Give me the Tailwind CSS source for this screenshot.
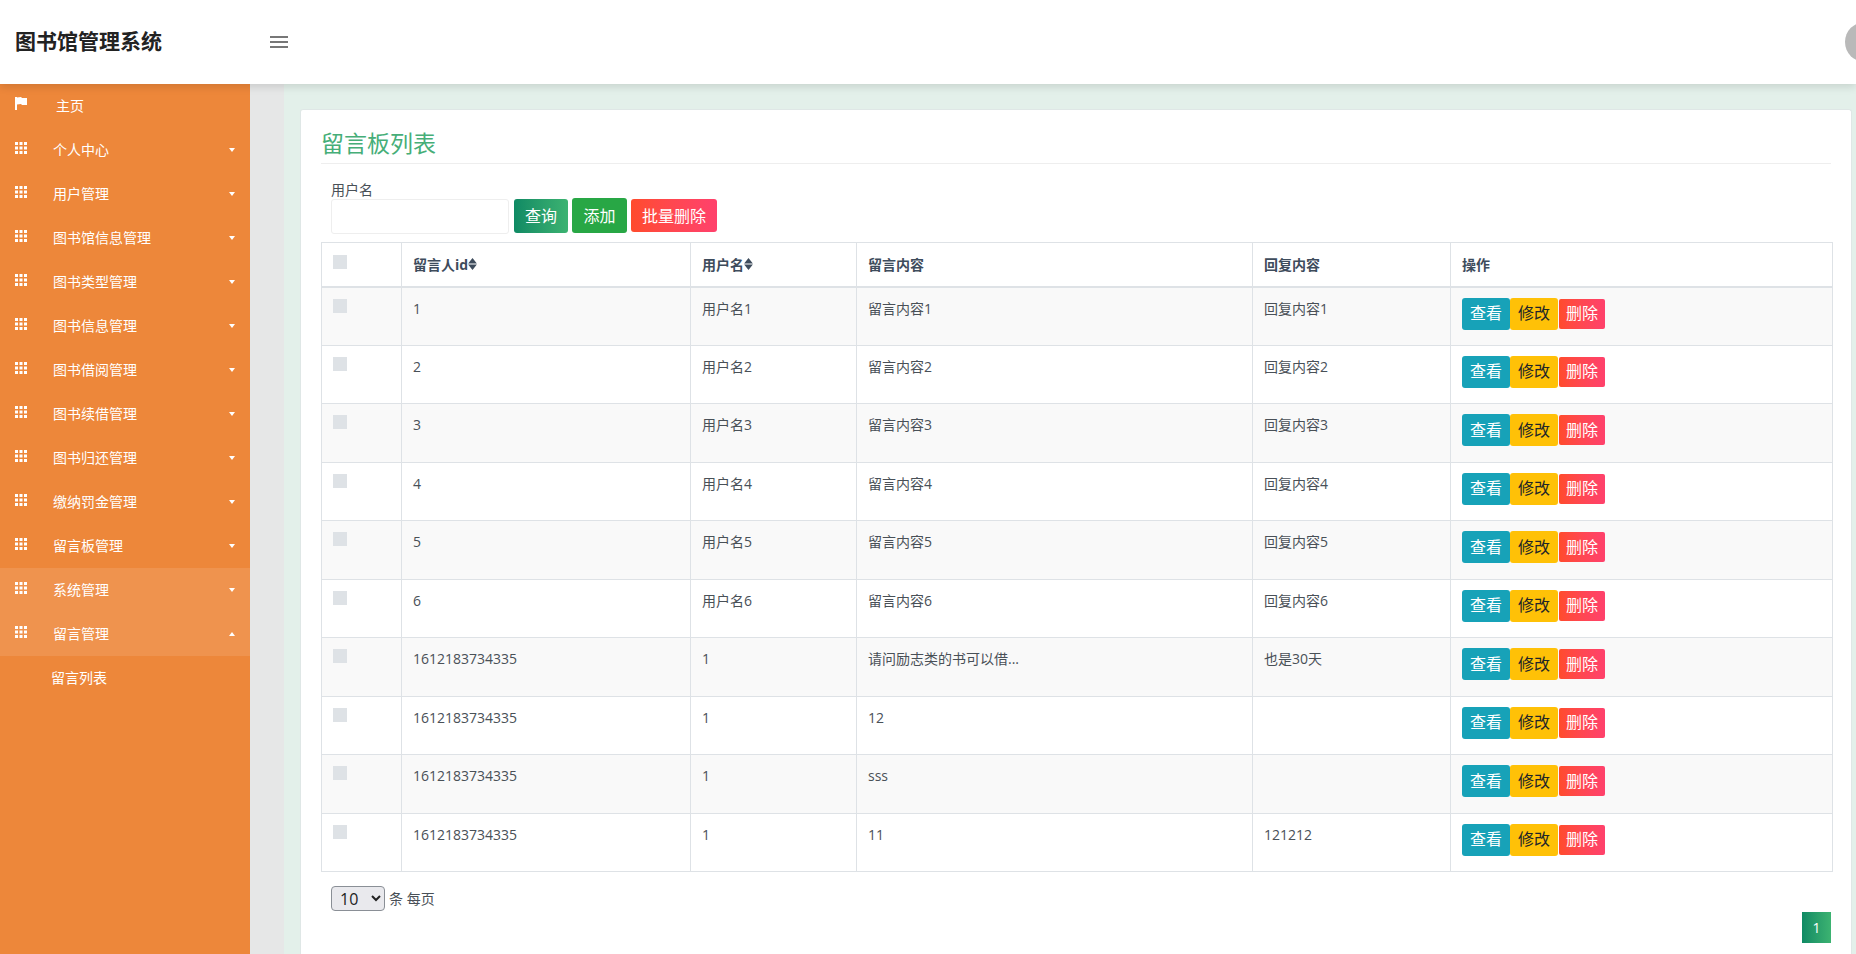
<!DOCTYPE html>
<html lang="zh-CN">
<head>
  <meta charset="UTF-8">
  <title>图书馆管理系统</title>
  <script src="https://cdn.jsdelivr.net/npm/@tailwindcss/browser@4"></script>
</head>
<body class="h-[954px] overflow-hidden bg-white text-[14px] text-[#495057] font-['Open_Sans','Noto_Sans_CJK_SC',sans-serif]">

  <!-- header -->
  <header class="relative z-10 flex h-[84px] items-center overflow-hidden bg-white shadow-[0_3px_8px_rgba(0,0,0,0.12)]">
    <div class="w-[250px] pb-[2px] pl-[15px] text-[21px] leading-[28px] font-bold text-[#222]">图书馆管理系统</div>
    <svg class="ml-[20px] h-[12px] w-[18px] text-[#777]" viewBox="0 0 18 12" fill="currentColor"><rect y="0" width="18" height="2"/><rect y="5" width="18" height="2"/><rect y="10" width="18" height="2"/></svg>
    <div class="mr-[-29px] ml-auto h-10 w-10 rounded-full bg-[#b9b9b9]"></div>
  </header>

  <div class="flex h-[870px]">
    <!-- sidebar -->
    <aside id="menu" class="w-[250px] shrink-0 bg-[#ed873a] text-[14px] text-white">
      <a class="flex h-[44px] items-center pl-[15px]">
        <svg class="mb-[5px] h-[13px] w-[13px]" viewBox="0 0 13 13" fill="currentColor"><rect x="0" y="0" width="2" height="13"/><path d="M2 0.5 L6 0 L7 1 L12 1 L12 8 L7 8 L6 7 L2 7.500 Z"/></svg>
        <span class="ml-[28px] pb-[2px]">主页</span>
      </a>
    </aside>

    <!-- main -->
    <main class="min-w-0 flex-1 bg-[#e6e7e7] pl-[34px]">
      <div class="h-full bg-[#e3f0ea] pt-[25px] pl-[16px] pr-[4px]">
        <section class="h-full rounded-t-[3px] border border-b-0 border-[#dfe7e6] bg-white px-[20px] pt-[18px]">
          <h2 class="h-[36px] border-b border-[#eeeeee] text-[23px] leading-[30px] text-[#46ae78]">留言板列表</h2>

          <form class="flex h-[78px] items-end pb-[8px] pl-[10px]">
            <label class="mr-[5px] flex flex-col text-[14px] leading-[18px]">用户名
              <input class="mt-0 h-[35px] w-[178px] rounded-[3px] border border-[#eeeeee] bg-white" type="text">
            </label>
            <button type="button" class="mr-[4px] mb-[1px] h-[34px] w-[54px] rounded-[3px] bg-gradient-to-r from-[#0e8a64] to-[#3cb371] text-[16px] text-white">查询</button>
            <button type="button" class="mr-[4px] mb-[1px] h-[35px] w-[55px] rounded-[3px] bg-[#28a745] text-[16px] text-white">添加</button>
            <button type="button" class="mb-[2px] h-[33px] w-[86px] rounded-[3px] bg-gradient-to-r from-[#ff4b2b] to-[#ff416c] text-[16px] text-white">批量删除</button>
          </form>

          <table class="w-[1511px] table-fixed border-collapse border border-[#dee2e6] text-[14px] leading-[21px]">
            <colgroup><col class="w-[80px]"><col class="w-[289px]"><col class="w-[166px]"><col class="w-[396px]"><col class="w-[198px]"><col class="w-[382px]"></colgroup>
            <thead>
              <tr class="h-[44px] border-b-2 border-[#dee2e6] text-left font-bold text-[#3e4c5c]">
                <th class="border-r border-[#dee2e6] px-[11px] pb-[5px] align-middle"><span class="block h-[14px] w-[14px] bg-[#dee2e6]"></span></th>
                <th class="border-r border-[#dee2e6] px-[11px]"><span class="flex items-center">留言人id<svg class="h-[12px] w-[9px]" viewBox="0 0 8 11" fill="currentColor"><path d="M0 5L4 0L8 5ZM0 6L8 6L4 11Z"/></svg></span></th>
                <th class="border-r border-[#dee2e6] px-[11px]"><span class="flex items-center">用户名<svg class="h-[12px] w-[9px]" viewBox="0 0 8 11" fill="currentColor"><path d="M0 5L4 0L8 5ZM0 6L8 6L4 11Z"/></svg></span></th>
                <th class="border-r border-[#dee2e6] px-[11px]">留言内容</th>
                <th class="border-r border-[#dee2e6] px-[11px]">回复内容</th>
                <th class="px-[11px]">操作</th>
              </tr>
            </thead>
            <tbody id="rows"></tbody>
          </table>

          <div class="mt-[14px] flex items-center pl-[10px]">
            <select class="h-[25px] w-[54px] appearance-auto rounded-[4px] border border-[#8a8f96] bg-[#e9e9ed] pl-[4px] text-[16px] text-[#222]"><option>10</option></select>
            <span class="ml-[4px]">条 每页</span>
          </div>
          <div class="mt-px flex justify-end">
            <span class="flex h-[31px] w-[29px] items-center justify-center bg-gradient-to-r from-[#0e8a64] to-[#3cb371] text-white">1</span>
          </div>
        </section>
      </div>
    </main>
  </div>

  <script>
    const grid = '<svg class="mb-[4px] h-[12px] w-[12px]" viewBox="0 0 12 12" fill="currentColor"><path d="M0 0h3v3H0zM4.500 0h3v3h-3zM9 0h3v3H9zM0 4.500h3v3H0zM4.500 4.500h3v3h-3zM9 4.500h3v3H9zM0 9h3v3H0zM4.500 9h3v3h-3zM9 9h3v3H9z"/></svg>';
    const down = '<span class="ml-auto h-0 w-0 border-x-[3.5px] border-t-[4px] border-x-transparent border-t-white"></span>';
    const up = '<span class="ml-auto h-0 w-0 border-x-[3.5px] border-b-[4px] border-x-transparent border-b-white"></span>';

    const names = ['个人中心', '用户管理', '图书馆信息管理', '图书类型管理', '图书信息管理', '图书借阅管理', '图书续借管理', '图书归还管理', '缴纳罚金管理', '留言板管理'];
    let menu = names.map(n => `<a class="flex h-[44px] items-center pl-[15px] pr-[15px]">${grid}<span class="ml-[26px] pb-[2px]">${n}</span>${down}</a>`).join('');
    menu += `<a class="flex h-[44px] items-center bg-white/10 pl-[15px] pr-[15px]">${grid}<span class="ml-[26px] pb-[2px]">系统管理</span>${down}</a>`;
    menu += `<a class="flex h-[44px] items-center bg-white/10 pl-[15px] pr-[15px]">${grid}<span class="ml-[26px] pb-[2px]">留言管理</span>${up}</a>`;
    menu += '<a class="flex h-[44px] items-center pb-[2px] pl-[51px]">留言列表</a>';
    document.getElementById('menu').insertAdjacentHTML('beforeend', menu);

    const data = [
      ['1', '用户名1', '留言内容1', '回复内容1'],
      ['2', '用户名2', '留言内容2', '回复内容2'],
      ['3', '用户名3', '留言内容3', '回复内容3'],
      ['4', '用户名4', '留言内容4', '回复内容4'],
      ['5', '用户名5', '留言内容5', '回复内容5'],
      ['6', '用户名6', '留言内容6', '回复内容6'],
      ['1612183734335', '1', '请问励志类的书可以借...', '也是30天'],
      ['1612183734335', '1', '12', ''],
      ['1612183734335', '1', 'sss', ''],
      ['1612183734335', '1', '11', '121212'],
    ];
    document.getElementById('rows').innerHTML = data.map((r, i) => `
      <tr class="h-[58.5px] border-b border-[#dee2e6] align-top ${i % 2 == 0 ? 'bg-[#f9f9f9]' : 'bg-white'}">
        <td class="border-r border-[#dee2e6] px-[11px] pt-[11px]"><span class="block h-[14px] w-[14px] bg-[#dee2e6]"></span></td>
        ${r.map(c => `<td class="border-r border-[#dee2e6] px-[11px] pt-[10px]">${c}</td>`).join('')}
        <td class="px-[11px] pt-[10px]"><div class="flex items-center">
          <button type="button" class="h-[32px] w-[48px] rounded-[3px] bg-[#17a2b8] text-[16px] text-white">查看</button>
          <button type="button" class="h-[32px] w-[48px] rounded-[3px] bg-[#ffc107] text-[16px] text-[#212529]">修改</button>
          <button type="button" class="ml-px h-[30px] w-[46px] rounded-[2px] bg-gradient-to-r from-[#ff4b2b] to-[#ff416c] text-[16px] text-white">删除</button>
        </div></td>
      </tr>`).join('');
  </script>
</body>
</html>
